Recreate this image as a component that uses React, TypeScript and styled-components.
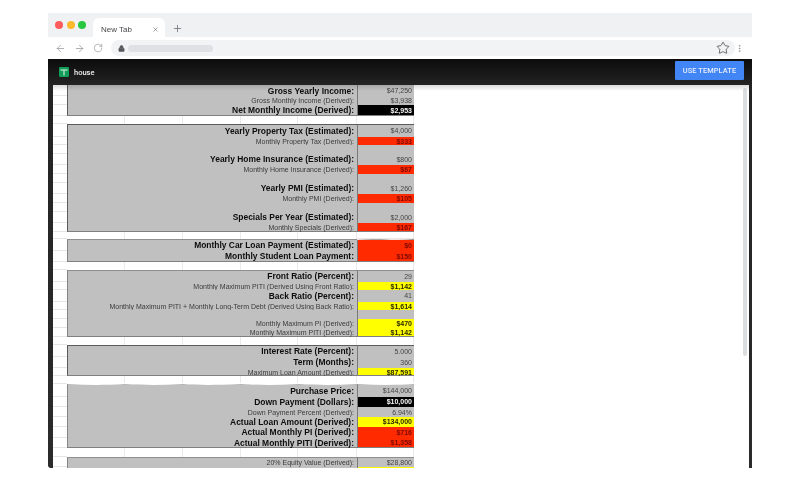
import React from 'react';
import styled, { createGlobalStyle } from 'styled-components';
import { ArrowLeft, ArrowRight, RotateCw, Lock, X, Plus, Star, MoreVertical } from 'lucide-react';

const Global = createGlobalStyle`
  html, body { margin: 0; padding: 0; background: #fff; }
  body { font-family: "Liberation Sans", Arial, sans-serif; }
`;

const Page = styled.div`
  width: 800px; height: 480px; box-sizing: border-box; padding: 13px 48px 12px;
  background: #fff; overflow: hidden; filter: blur(0.35px);
`;
const Win = styled.div`display: flex; flex-direction: column; height: 455px;`;
const TabStrip = styled.div`
  height: 24px; background: #f0f1f3; display: flex; align-items: flex-end; flex: none;
  padding-left: 7px;
`;
const Lights = styled.div`display: flex; gap: 3.7px; align-self: flex-start; margin-top: 8px; width: 38px; flex: none;`;
const Light = styled.span<{ $c: string }>`width: 8px; height: 8px; border-radius: 50%; background: ${p => p.$c};`;
const Tab = styled.div`
  width: 72px; height: 19px; background: #fff; border-radius: 6px 6px 0 0; box-sizing: border-box;
  padding: 3px 6px 0 8px; display: flex; align-items: center; justify-content: space-between;
  font-size: 8px; color: #45474a; flex: none;
`;
const NewTab = styled.div`margin: 0 0 3px 7px; color: #63666a; display: flex;`;
const Toolbar = styled.div`
  height: 22px; background: #fff; display: flex; align-items: center; flex: none; padding-left: 7px; color: #8a8d91;
`;
const NavIcons = styled.div`display: flex; gap: 8px; width: 56px; flex: none;`;
const Omni = styled.div`
  width: 624px; height: 16px; border-radius: 8px; background: #f1f3f4; display: flex; align-items: center;
  padding: 0 5px 0 7px; box-sizing: border-box; flex: none; color: #55585c;
`;
const Url = styled.div`width: 85px; height: 7px; border-radius: 4px; background: #dfe1e5; margin-left: 3px;`;
const StarWrap = styled.div`margin-left: auto; color: #3f4144; display: flex;`;
const Menu = styled.div`margin-left: 0; color: #777; display: flex;`;
const Frame = styled.div`
  flex: 1; min-height: 0; display: flex; flex-direction: column;
  background: linear-gradient(#0c0c0c, #232323 26px, #2b2b2b);
  border-radius: 0 0 0 3px; overflow: hidden;
`;
const Bar = styled.div`
  height: 26px; flex: none; display: flex; align-items: center; padding: 0 8px 0 11px;
  color: #f2f2f2; font-size: 7.5px;
`;
const DocName = styled.span`margin-left: 5px; font-weight: 500; font-family: Roboto, "Liberation Sans", sans-serif;`;
const UseBtn = styled.div`
  margin-left: auto; width: 69px; height: 19px; background: #4285f4; border-radius: 1px; margin-top: -3px;
  display: flex; align-items: center; justify-content: center; color: #e8effc;
  font: 500 7.4px Roboto, "Liberation Sans", sans-serif; letter-spacing: 0.1px;
`;
const Body = styled.div`
  flex: 1; min-height: 0; margin: 0 3px 0 5px; background: #fff; display: flex; position: relative; overflow: hidden;
`;
const TopShade = styled.div`
  position: absolute; left: 0; right: 0; top: 0; height: 6px; z-index: 2;
  background: linear-gradient(rgba(0,0,0,.14), rgba(0,0,0,0));
`;
const Sheet = styled.div`width: 361px; flex: none;`;
const Blank = styled.div`flex: 1; display: flex; justify-content: flex-end; padding-right: 2px;`;
const Scroll = styled.div`width: 4px; height: 268px; margin-top: 3px; border-radius: 2px; background: #dcdde0;`;

const RowBox = styled.div<{ $h: number }>`
  display: flex; height: ${p => p.$h}px; position: relative;
`;
const RowHead = styled.div`
  width: 14px; flex: none; box-sizing: border-box; background: #fff; border-bottom: 1px solid #e6e6e6;
`;
const EDGES: Record<string, string> = {
  top: 'border-top: 1px solid #5c5c5c;',
  soft: 'border-top: 1px solid #8f8f8f;',
  wave: 'border-top: 1px solid #b4b4b4;',
  bottom: 'border-bottom: 1px solid #808080;',
};
const Label = styled.div<{ $strong?: boolean; $edge?: string; $dark?: boolean }>`
  width: 290px; flex: none; box-sizing: border-box; background: #c0c0c0; text-align: right;
  padding-right: 3px; white-space: nowrap; color: ${p => (p.$strong ? '#0d0d0d' : '#3a3a3a')};
  font-size: ${p => (p.$strong ? '8.45px' : '7px')}; font-weight: ${p => (p.$strong ? 700 : 400)};
  border-left: 1px solid ${p => (p.$dark ? '#5c5c5c' : '#858585')};
  ${p => (p.$edge ? EDGES[p.$edge] : '')}
`;
const TONES: Record<string, { bg: string; fg: string; weight: number }> = {
  plain: { bg: '#c0c0c0', fg: '#444', weight: 400 },
  black: { bg: '#000', fg: '#f5f5f5', weight: 700 },
  red: { bg: '#ff2a00', fg: '#7c0a00', weight: 700 },
  yellow: { bg: '#ffff00', fg: '#2a2a00', weight: 700 },
};
const Value = styled.div<{ $tone: string; $edge?: string }>`
  width: 57px; flex: none; box-sizing: border-box; text-align: right; padding-right: 2px; font-size: 7px;
  background: ${p => TONES[p.$tone].bg}; color: ${p => TONES[p.$tone].fg}; font-weight: ${p => TONES[p.$tone].weight};
  border-left: 1px solid #7a7a7a; white-space: nowrap;
  ${p => (p.$edge ? EDGES[p.$edge] : '')}
`;
const GapCells = styled.div`flex: 1; display: flex; background: #fff;`;
const GapCell = styled.div<{ $w: number }>`
  width: ${p => p.$w}px; box-sizing: border-box; border-right: 1px solid #eaeaea; flex: none;
`;
const Wave = styled.svg<{ $x: number; $w: number }>`
  position: absolute; top: -1px; left: ${p => p.$x}px; width: ${p => p.$w}px; height: 3px; z-index: 1;
`;

type R = { h: number; label?: string; strong?: boolean; value?: string; tone?: string };
type B = { rows: R[]; gap: number; wave?: 'full' | 'value'; top?: string; dark?: boolean };

const blocks: B[] = [
  { dark: true, gap: 8, rows: [
    { h: 11, label: 'Gross Yearly Income:', strong: true, value: '$47,250' },
    { h: 9, label: 'Gross Monthly Income (Derived):', value: '$3,938' },
    { h: 11, label: 'Net Monthly Income (Derived):', strong: true, value: '$2,953', tone: 'black' },
  ]},
  { gap: 7, top: 'top', dark: true, rows: [
    { h: 13, label: 'Yearly Property Tax (Estimated):', strong: true, value: '$4,000' },
    { h: 8, label: 'Monthly Property Tax (Derived):', value: '$333', tone: 'red' },
    { h: 9 },
    { h: 11, label: 'Yearly Home Insurance (Estimated):', strong: true, value: '$800' },
    { h: 9, label: 'Monthly Home Insurance (Derived):', value: '$67', tone: 'red' },
    { h: 9 },
    { h: 11, label: 'Yearly PMI (Estimated):', strong: true, value: '$1,260' },
    { h: 9, label: 'Monthly PMI (Derived):', value: '$105', tone: 'red' },
    { h: 9 },
    { h: 11, label: 'Specials Per Year (Estimated):', strong: true, value: '$2,000' },
    { h: 9, label: 'Monthly Specials (Derived):', value: '$167', tone: 'red' },
  ]},
  { gap: 8, wave: 'value', top: 'soft', rows: [
    { h: 12, label: 'Monthly Car Loan Payment (Estimated):', strong: true, value: '$0', tone: 'red' },
    { h: 11, label: 'Monthly Student Loan Payment:', strong: true, value: '$150', tone: 'red' },
  ]},
  { gap: 8, top: 'soft', rows: [
    { h: 12, label: 'Front Ratio (Percent):', strong: true, value: '29' },
    { h: 8, label: 'Monthly Maximum PITI (Derived Using Front Ratio):', value: '$1,142', tone: 'yellow' },
    { h: 12, label: 'Back Ratio (Percent):', strong: true, value: '41' },
    { h: 8, label: 'Monthly Maximum PITI + Monthly Long-Term Debt (Derived Using Back Ratio):', value: '$1,614', tone: 'yellow' },
    { h: 9 },
    { h: 9, label: 'Monthly Maximum PI (Derived):', value: '$470', tone: 'yellow' },
    { h: 9, label: 'Monthly Maximum PITI (Derived):', value: '$1,142', tone: 'yellow' },
  ]},
  { gap: 8, top: 'top', dark: true, rows: [
    { h: 12, label: 'Interest Rate (Percent):', strong: true, value: '5.000' },
    { h: 11, label: 'Term (Months):', strong: true, value: '360' },
    { h: 8, label: 'Maximum Loan Amount (Derived):', value: '$87,591', tone: 'yellow' },
  ]},
  { gap: 9, wave: 'full', top: 'wave', rows: [
    { h: 13, label: 'Purchase Price:', strong: true, value: '$144,000' },
    { h: 10, label: 'Down Payment (Dollars):', strong: true, value: '$10,000', tone: 'black' },
    { h: 10, label: 'Down Payment Percent (Derived):', value: '6.94%' },
    { h: 10, label: 'Actual Loan Amount (Derived):', strong: true, value: '$134,000', tone: 'yellow' },
    { h: 11, label: 'Actual Monthly PI (Derived):', strong: true, value: '$716', tone: 'red' },
    { h: 10, label: 'Actual Monthly PITI (Derived):', strong: true, value: '$1,358', tone: 'red' },
  ]},
  { gap: 0, top: 'soft', rows: [
    { h: 10, label: '20% Equity Value (Derived):', value: '$28,800' },
    { h: 9, value: '', tone: 'yellow' },
  ]},
];

const GAP_WIDTHS = [58, 58, 58, 57, 59, 57];
const WAVE_FULL = 'M0 0 H347 V1 C330 2.2 310 2.2 290 1 C270 2.2 250 2.2 232 1 C212 2.2 190 2.2 174 1 C150 2.2 130 2.2 116 1 C96 2.2 76 2.2 58 1 C40 2.2 20 2.2 0 1 Z';
const WAVE_VALUE = 'M0 0 H57 V1 C48 2 38 2.4 28 1.4 C18 0.8 8 1.6 0 2 Z';

const SheetsLogo = () => (
  <svg width="10" height="10" viewBox="0 0 10 10">
    <rect width="10" height="10" rx="1" fill="#0f9d58" />
    <path d="M1.5 2.6H8.5V3.6H5.5V8.5H4.5V3.6H1.5Z" fill="#e6f5ec" />
  </svg>
);

export default function App() {
  return (
    <Page>
      <Global />
      <Win>
        <TabStrip>
          <Lights>
            <Light $c="#ff5b5b" /><Light $c="#fdb92c" /><Light $c="#27c83f" />
          </Lights>
          <Tab>New Tab <X size={7} strokeWidth={2} color="#666" /></Tab>
          <NewTab><Plus size={11} strokeWidth={1.6} /></NewTab>
        </TabStrip>
        <Toolbar>
          <NavIcons>
            <ArrowLeft size={11} strokeWidth={1.5} />
            <ArrowRight size={11} strokeWidth={1.5} />
            <RotateCw size={10} strokeWidth={1.5} />
          </NavIcons>
          <Omni>
            <Lock size={7} fill="#55585c" strokeWidth={2} />
            <Url />
            <StarWrap><Star size={14} strokeWidth={1.3} /></StarWrap>
          </Omni>
          <Menu><MoreVertical size={9} strokeWidth={1.6} /></Menu>
        </Toolbar>
        <Frame>
          <Bar>
            <SheetsLogo />
            <DocName>house</DocName>
            <UseBtn>USE TEMPLATE</UseBtn>
          </Bar>
          <Body>
            <TopShade />
            <Sheet>
              {blocks.map((b, i) => (
                <React.Fragment key={i}>
                  {b.rows.map((r, j) => {
                    const edge = j === 0 ? b.top : j === b.rows.length - 1 && b.gap ? 'bottom' : undefined;
                    const lead = r.h + (j === 0 && b.top ? -1 : r.strong ? 0 : 1) + (j === 0 && !b.top ? 1 : 0);
                    return (
                      <RowBox $h={r.h} style={{ lineHeight: `${lead}px` }} key={j}>
                        <RowHead />
                        <Label $strong={r.strong} $edge={edge} $dark={b.dark}>{r.label}</Label>
                        <Value $tone={r.tone || 'plain'} $edge={edge}>{r.value}</Value>
                        {j === 0 && b.wave === 'full' && (
                          <Wave $x={14} $w={347} viewBox="0 0 347 3" preserveAspectRatio="none"><path d={WAVE_FULL} fill="#fff" /></Wave>
                        )}
                        {j === 0 && b.wave === 'value' && (
                          <Wave $x={304} $w={57} viewBox="0 0 57 3" preserveAspectRatio="none"><path d={WAVE_VALUE} fill="#efe6e3" /></Wave>
                        )}
                      </RowBox>
                    );
                  })}
                  {b.gap > 0 && (
                    <RowBox $h={b.gap}>
                      <RowHead />
                      <GapCells>
                        {GAP_WIDTHS.map((w, k) => <GapCell $w={w} key={k} />)}
                      </GapCells>
                    </RowBox>
                  )}
                </React.Fragment>
              ))}
            </Sheet>
            <Blank><Scroll /></Blank>
          </Body>
        </Frame>
      </Win>
    </Page>
  );
}
